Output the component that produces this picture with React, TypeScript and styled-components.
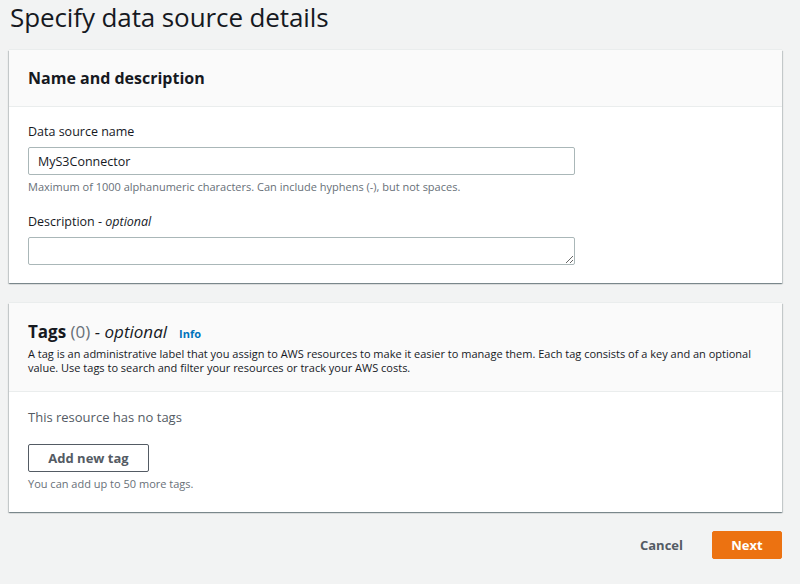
import React from "react";
import styled, { createGlobalStyle } from "styled-components";

const Global = createGlobalStyle`
  html, body { margin: 0; padding: 0; background: #f2f3f3; }
  body { font-family: "Open Sans", "Noto Sans", sans-serif; color: #16191f; }
  * { box-sizing: border-box; }
`;

const Page = styled.div`
  width: 800px;
  height: 584px;
  padding: 0 18px 0 9px;
  background: #f2f3f3;
  display: flex;
  flex-direction: column;
`;

const Title = styled.h1`
  margin: 0 0 16px 1px;
  font-size: 26px;
  line-height: 34px;
  font-weight: 400;
  color: #16191f;
  letter-spacing: -0.1px;
`;

const Card = styled.section`
  background: #fff;
  box-shadow: 0 1px 1px 0 rgba(0, 28, 36, 0.3), 1px 1px 1px 0 rgba(0, 28, 36, 0.15),
    -1px 1px 1px 0 rgba(0, 28, 36, 0.15), 0 -1px 0 0 #eaeded;
  display: flex;
  flex-direction: column;
  & + & { margin-top: 20px; }
`;

const CardHeader = styled.div<{ $tall?: boolean }>`
  background: #fafafa;
  border-bottom: 1px solid #eaeded;
  padding: ${(p) => (p.$tall ? "17px 19px 17px" : "0 19px")};
  height: ${(p) => (p.$tall ? "89px" : "57px")};
  display: flex;
  flex-direction: column;
  justify-content: ${(p) => (p.$tall ? "flex-start" : "center")};
`;

const HeaderTitle = styled.h2<{ $size?: number }>`
  margin: 0;
  font-size: ${(p) => p.$size ?? 17}px;
  line-height: 24px;
  font-weight: 700;
  color: #16191f;
  display: flex;
  align-items: baseline;
  gap: 4px;
`;

const Counter = styled.span`
  font-weight: 400;
  color: #687078;
`;

const Optional = styled.span`
  font-weight: 400;
  font-style: italic;
`;

const InfoLink = styled.a`
  font-size: 11px;
  font-weight: 700;
  color: #0073bb;
  margin-left: 8px;
  text-decoration: none;
`;

const HeaderDesc = styled.p`
  margin: 1px 0 0;
  font-size: 11px;
  line-height: 14px;
  color: #16191f;
`;

const CardBody = styled.div<{ $bottom?: number }>`
  padding: 15px 19px ${(p) => p.$bottom ?? 18}px;
  display: flex;
  flex-direction: column;
  align-items: flex-start;
`;

const Field = styled.div`
  display: flex;
  flex-direction: column;
  width: 547px;
  & + & { margin-top: 17px; }
`;

const Label = styled.label`
  font-size: 12.5px;
  line-height: 20px;
  color: #16191f;
  margin-bottom: 5px;
`;

const Input = styled.input`
  height: 28px;
  border: 1px solid #aab7b8;
  border-radius: 2px;
  padding: 0 9px;
  font-family: inherit;
  font-size: 12.5px;
  color: #16191f;
  background: #fff;
  outline: none;
`;

const TextArea = styled.textarea`
  height: 28px;
  border: 1px solid #aab7b8;
  border-radius: 2px;
  padding: 4px 9px;
  font-family: inherit;
  font-size: 12.5px;
  resize: vertical;
  outline: none;
  display: block;
  margin: 0;
`;

const Hint = styled.div`
  margin-top: 4px;
  font-size: 11px;
  line-height: 16px;
  color: #687078;
`;

const Empty = styled.div`
  font-size: 13px;
  line-height: 20px;
  color: #545b64;
`;

const SecondaryButton = styled.button`
  margin-top: 17px;
  height: 28px;
  width: 121px;
  border: 1px solid #545b64;
  border-radius: 2px;
  background: #fff;
  color: #545b64;
  font-family: inherit;
  font-size: 13px;
  font-weight: 700;
  padding: 0;
`;

const Footer = styled.div`
  margin-top: 19px;
  display: flex;
  justify-content: flex-end;
  align-items: center;
  gap: 14px;
`;

const LinkButton = styled.button`
  background: transparent;
  border: none;
  color: #545b64;
  font-family: inherit;
  font-size: 13px;
  font-weight: 700;
  height: 28px;
  padding: 0 15px;
`;

const PrimaryButton = styled.button`
  height: 28px;
  width: 70px;
  background: #ec7211;
  border: 1px solid #ec7211;
  border-radius: 2px;
  color: #fff;
  font-family: inherit;
  font-size: 13px;
  font-weight: 700;
  padding: 0;
`;

export default function App() {
  return (
    <Page>
      <Global />
      <Title>Specify data source details</Title>
      <Card>
        <CardHeader>
          <HeaderTitle $size={16}>Name and description</HeaderTitle>
        </CardHeader>
        <CardBody $bottom={18}>
          <Field>
            <Label>Data source name</Label>
            <Input defaultValue="MyS3Connector" />
            <Hint>Maximum of 1000 alphanumeric characters. Can include hyphens (-), but not spaces.</Hint>
          </Field>
          <Field>
            <Label>
              Description - <i>optional</i>
            </Label>
            <TextArea />
          </Field>
        </CardBody>
      </Card>
      <Card>
        <CardHeader $tall>
          <HeaderTitle>
            <span>
              Tags <Counter>(0)</Counter> <Optional>- optional</Optional>
            </span>
            <InfoLink>Info</InfoLink>
          </HeaderTitle>
          <HeaderDesc>
            A tag is an administrative label that you assign to AWS resources to make it easier to manage them. Each tag
            consists of a key and an optional value. Use tags to search and filter your resources or track your AWS costs.
          </HeaderDesc>
        </CardHeader>
        <CardBody $bottom={20}>
          <Empty>This resource has no tags</Empty>
          <SecondaryButton>Add new tag</SecondaryButton>
          <Hint>You can add up to 50 more tags.</Hint>
        </CardBody>
      </Card>
      <Footer>
        <LinkButton>Cancel</LinkButton>
        <PrimaryButton>Next</PrimaryButton>
      </Footer>
    </Page>
  );
}
